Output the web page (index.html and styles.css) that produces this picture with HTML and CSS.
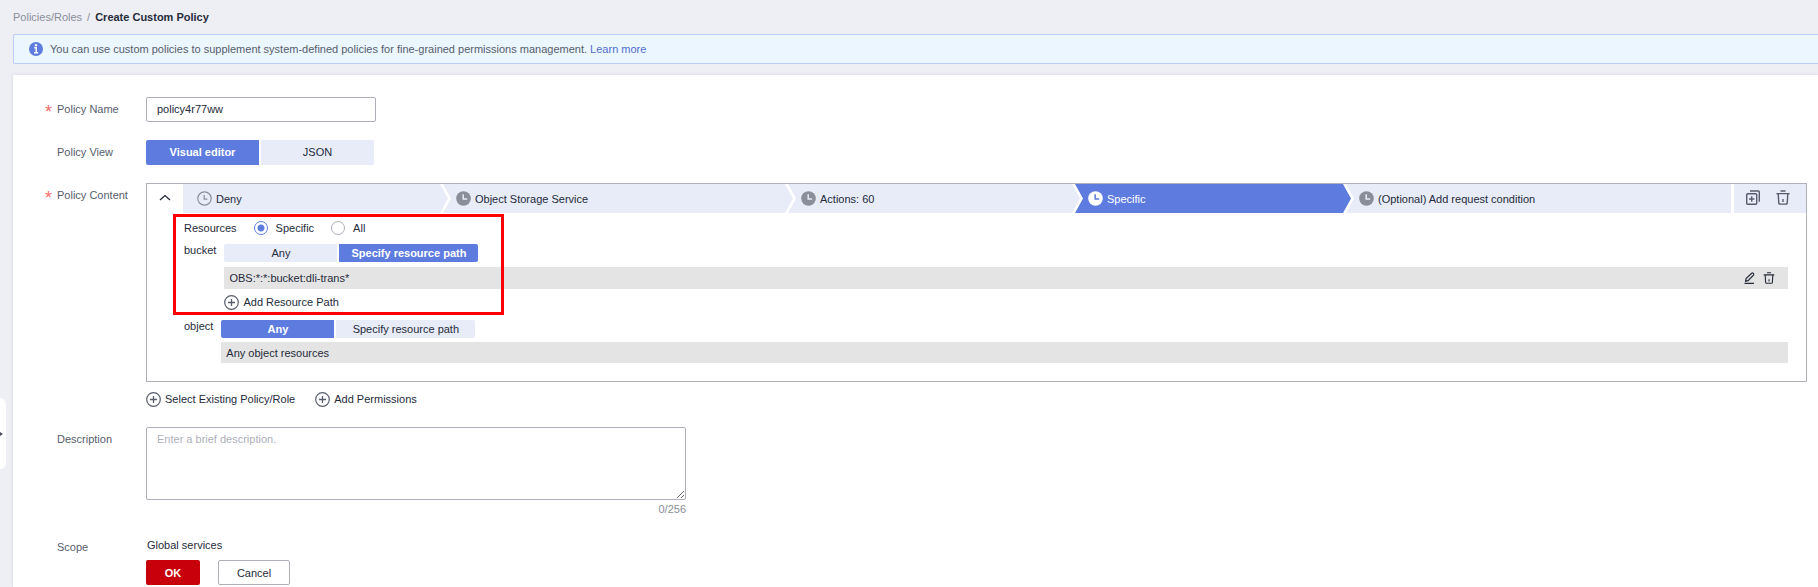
FILE: index.html
```html
<!DOCTYPE html>
<html lang="en">
<head>
<meta charset="utf-8">
<title>Create Custom Policy</title>
<link rel="stylesheet" href="styles.css">
</head>
<body>
<svg class="defs" aria-hidden="true">
  <symbol id="clock" viewBox="0 0 15 15"><circle cx="7.5" cy="7.5" r="7.3" fill="currentColor"/><path d="M7.2 3.2v4.9h4" fill="none" stroke="var(--hand, #e8ecf8)" stroke-width="1.5"/></symbol>
  <symbol id="clock-line" viewBox="0 0 15 15"><circle cx="7.5" cy="7.5" r="6.7" fill="none" stroke="currentColor" stroke-width="1.2"/><path d="M7.2 4v4.2h3.2" fill="none" stroke="currentColor" stroke-width="1.2"/></symbol>
  <symbol id="plus" viewBox="0 0 15 15"><circle cx="7.5" cy="7.5" r="6.8" fill="none" stroke="currentColor" stroke-width="1.2"/><path d="M7.5 4v7M4 7.500h7" fill="none" stroke="currentColor" stroke-width="1.3"/></symbol>
  <symbol id="trash" viewBox="0 0 14 15"><path d="M4.500 1h5M.4 3.600h13.200M2.200 3.600l.6 9.600q.1.900 1 .9h6.400q.9 0 1-.9l.6-9.600M7 9v3" fill="none" stroke="currentColor" stroke-width="1.400"/></symbol>
  <symbol id="copy" viewBox="0 0 14 15"><path d="M1.700 3.700h8q1 0 1 1v8.600q0 1-1 1h-8q-1 0-1-1v-8.600q0-1 1-1zM4 1h8.300q1 0 1 1v9.700M5.700 6.300v5.400M3 9h5.400" fill="none" stroke="currentColor" stroke-width="1.400"/></symbol>
  <symbol id="pencil" viewBox="0 0 12 12"><path d="M1.600 9.200l.5-2.700 5.600-5.300q.8-.6 1.600.2t.2 1.700l-5.400 5.500zM.5 11.300h9.500" fill="none" stroke="currentColor" stroke-width="1.200"/></symbol>
</svg>

<header class="crumbs">
  <a class="crumb-link" href="#">Policies/Roles</a>
  <span class="crumb-sep">/</span>
  <strong>Create Custom Policy</strong>
</header>

<div class="notice">
  <svg class="notice-icon" viewBox="0 0 14 14" aria-hidden="true"><circle cx="7" cy="7" r="7" fill="#5e7ce0"/><circle cx="7" cy="3.300" r="1.200" fill="#fff"/><path d="M5.300 5.800h1.900v4.700M5 10.700h4.200" fill="none" stroke="#fff" stroke-width="1.500"/></svg>
  <p>You can use custom policies to supplement system-defined policies for fine-grained permissions management. <a href="#">Learn more</a></p>
</div>

<button class="handle" type="button" aria-label="Expand menu"><svg viewBox="0 0 3 6" aria-hidden="true"><path d="M0 1l3 2-3 2z" fill="#464c59"/></svg></button>

<main class="panel">
  <form class="form">
    <div class="row">
      <label class="label required" for="name">Policy Name</label>
      <input class="text-input" id="name" type="text" value="policy4r77ww">
    </div>

    <div class="row">
      <span class="label" id="view-label">Policy View</span>
      <div class="toggle" role="group" aria-labelledby="view-label">
        <button class="seg on" type="button">Visual editor</button>
        <button class="seg" type="button">JSON</button>
      </div>
    </div>

    <div class="row content-row">
      <span class="label required">Policy Content</span>
      <div class="content">
        <section class="box">
          <div class="head">
            <button class="fold" type="button" aria-label="Collapse"><svg viewBox="0 0 12 7" aria-hidden="true"><path d="M1 6l5-4.500 5 4.500" fill="none" stroke="#252b3a" stroke-width="1.300"/></svg></button>
            <div class="steps">
              <button class="step" type="button"><svg class="icon"><use href="#clock-line"/></svg>Deny</button>
              <button class="step" type="button"><svg class="icon"><use href="#clock"/></svg>Object Storage Service</button>
              <button class="step" type="button"><svg class="icon"><use href="#clock"/></svg>Actions: 60</button>
              <button class="step current" type="button"><svg class="icon"><use href="#clock"/></svg>Specific</button>
              <button class="step" type="button"><svg class="icon"><use href="#clock"/></svg>(Optional) Add request condition</button>
            </div>
            <div class="tools">
              <button type="button" aria-label="Copy"><svg class="tool"><use href="#copy"/></svg></button>
              <button type="button" aria-label="Delete"><svg class="tool"><use href="#trash"/></svg></button>
            </div>
          </div>

          <div class="body">
            <div class="highlight"></div>
            <div class="radios">
              <span class="radios-title">Resources</span>
              <label class="radio"><input type="radio" name="res" checked>Specific</label>
              <label class="radio"><input type="radio" name="res">All</label>
            </div>

            <div class="resource">
              <span class="resource-name">bucket</span>
              <div class="resource-main">
                <div class="toggle small">
                  <button class="seg" type="button">Any</button>
                  <button class="seg wide on" type="button">Specify resource path</button>
                </div>
                <div class="path">
                  <span>OBS:*:*:bucket:dli-trans*</span>
                  <span class="path-tools">
                    <button type="button" aria-label="Edit path"><svg class="mini"><use href="#pencil"/></svg></button>
                    <button type="button" aria-label="Delete path"><svg class="mini"><use href="#trash"/></svg></button>
                  </span>
                </div>
                <button class="add" type="button"><svg class="icon"><use href="#plus"/></svg>Add Resource Path</button>
              </div>
            </div>

            <div class="resource">
              <span class="resource-name">object</span>
              <div class="resource-main">
                <div class="toggle small">
                  <button class="seg on" type="button">Any</button>
                  <button class="seg wide" type="button">Specify resource path</button>
                </div>
                <div class="path">Any object resources</div>
              </div>
            </div>
          </div>
        </section>

        <div class="adds">
          <button class="add" type="button"><svg class="icon"><use href="#plus"/></svg>Select Existing Policy/Role</button>
          <button class="add" type="button"><svg class="icon"><use href="#plus"/></svg>Add Permissions</button>
        </div>
      </div>
    </div>

    <div class="row">
      <label class="label" for="desc">Description</label>
      <div class="desc">
        <textarea id="desc" placeholder="Enter a brief description."></textarea>
        <span class="count">0/256</span>
      </div>
    </div>

    <div class="row">
      <span class="label">Scope</span>
      <div class="scope">
        <span class="scope-value">Global services</span>
        <div class="actions">
          <button class="btn primary" type="submit">OK</button>
          <button class="btn" type="button">Cancel</button>
        </div>
      </div>
    </div>
  </form>
</main>
</body>
</html>
```

FILE: styles.css
```css
* { box-sizing: border-box; }

body {
  margin: 0;
  min-height: 100vh;
  display: flex;
  flex-direction: column;
  background: #eeeff5;
  color: #252b3a;
  font: 11px/16px "Liberation Sans", Arial, sans-serif;
}

button, input, textarea { font: inherit; color: inherit; }
button { padding: 0; border: 0; background: none; cursor: pointer; }
a { text-decoration: none; }
svg { display: block; flex: none; }
.defs { position: absolute; width: 0; height: 0; }

.crumbs { display: flex; gap: 5px; padding: 9px 13px; }
.crumb-link, .crumb-sep { color: #8a8e99; }

.notice {
  display: flex;
  align-items: center;
  gap: 7px;
  height: 30px;
  margin-left: 13px;
  padding: 0 15px;
  border: 1px solid #beccfa;
  border-right: 0;
  border-radius: 2px 0 0 2px;
  background: #ebf6ff;
  color: #575d6c;
}
.notice p { margin: 0; }
.notice a { color: #526ecc; }
.notice-icon { width: 14px; height: 14px; }

.handle {
  position: absolute;
  left: 0;
  top: 398px;
  width: 6px;
  height: 71px;
  border-radius: 0 6px 6px 0;
  background: #fff;
}
.handle svg { width: 3px; height: 6px; }

.panel {
  flex: 1;
  margin: 11px 0 0 13px;
  padding: 22px 11px 1px 32px;
  background: #fff;
  box-shadow: 0 0 3px rgba(40, 50, 80, .15);
}

.form { display: flex; flex-direction: column; gap: 18px; }
.row { display: grid; grid-template-columns: 101px minmax(0, 1fr); align-items: start; }
.label { padding: 4px 0 4px 12px; color: #575d6c; }
.required { padding-left: 0; display: flex; }
.required::before { content: "*"; width: 12px; color: #f66f6a; font-size: 18px; line-height: 22px; height: 16px; }

.text-input {
  width: 230px;
  height: 25px;
  padding: 0 10px 2px;
  border: 1px solid #adb0b8;
  border-radius: 2px;
  background: #fff;
}

.toggle { display: flex; gap: 2px; height: 25px; }
.seg { width: 113px; padding-bottom: 1px; background: #e8ecf8; }
.seg:first-child { border-radius: 2px 0 0 2px; }
.seg:last-child { border-radius: 0 2px 2px 0; }
.seg.wide { width: 139px; }
.seg.on { background: #5e7ce0; color: #fff; font-weight: bold; }
.toggle.small { height: 18px; }

.box { border: 1px solid #adb0b8; }
.head { display: flex; height: 29px; }
.fold { width: 36px; display: grid; place-items: center; padding-bottom: 2px; }
.fold svg { width: 12px; height: 7px; }

.steps {
  flex: 1;
  display: grid;
  grid-template-columns: 260fr 345fr 287fr 271fr 385fr;
}
.step {
  display: flex;
  align-items: center;
  gap: 4px;
  margin-right: -5px;
  padding-left: 13px;
  background: #e8ecf8;
  clip-path: polygon(0 0, calc(100% - 8px) 0, 100% 50%, calc(100% - 8px) 100%, 0 100%, 8px 50%);
}
.step:first-child { padding-left: 14px; clip-path: polygon(0 0, calc(100% - 8px) 0, 100% 50%, calc(100% - 8px) 100%, 0 100%); }
.step:last-child { margin-right: 0; clip-path: polygon(0 0, 100% 0, 100% 100%, 0 100%, 8px 50%); }
.step.current { background: #5e7ce0; color: #fff; }
.step .icon { color: #8a8e99; }
.step.current .icon { color: #fff; --hand: #5e7ce0; }
.icon { width: 15px; height: 15px; }

.tools {
  display: flex;
  align-items: center;
  gap: 16px;
  margin-left: 3px;
  padding: 0 16px 2px 12px;
  background: #e8ecf8;
  color: #575d6c;
}
.tool { width: 14px; height: 15px; }

.body { position: relative; padding: 7px 18px 18px 37px; }
.highlight {
  position: absolute;
  left: 26px;
  top: 1px;
  width: 331px;
  height: 101px;
  border: 3px solid #f00;
  pointer-events: none;
}
.radios { display: flex; gap: 17px; }
.radio { display: flex; align-items: center; gap: 8px; }
.radio input {
  appearance: none;
  width: 14px;
  height: 14px;
  margin: 0;
  border: 1px solid #adb0b8;
  border-radius: 50%;
}
.radio input:checked { border-color: #5e7ce0; background: radial-gradient(#5e7ce0 3px, #fff 4px); }

.resource { display: flex; gap: 8px; margin-top: 8px; }
.resource + .resource { margin-top: 10px; }
.resource-name { margin-top: -2px; }
.resource-main { flex: 1; }
.path {
  display: flex;
  align-items: center;
  justify-content: space-between;
  height: 22px;
  margin: 5px 0;
  padding: 0 13px 1px 5px;
  background: #e4e4e4;
}
.resource:last-child .path { height: 21px; margin: 4px 0 0; padding-bottom: 0; }
.path-tools { display: flex; gap: 7px; }
.mini { width: 12px; height: 12px; }

.add { display: flex; align-items: center; gap: 4px; }
.add .icon { color: #575d6c; }
.adds { display: flex; gap: 20px; padding: 9px 0 2px; }

.desc { width: 540px; display: flex; flex-direction: column; }
.desc textarea {
  display: block;
  height: 73px;
  padding: 3px 10px;
  border: 1px solid #adb0b8;
  border-radius: 2px;
  resize: vertical;
}
.desc textarea::placeholder { color: #adb0b8; }
.count { align-self: flex-end; margin-top: 1px; color: #8a8e99; }

.scope-value { display: block; padding: 2px 1px 7px; }
.actions { display: flex; gap: 18px; }
.btn {
  width: 72px;
  height: 25px;
  border: 1px solid #adb0b8;
  border-radius: 2px;
  background: #fff;
}
.btn.primary { width: 54px; border: 0; background: #c7000b; color: #fff; font-weight: bold; }
```
